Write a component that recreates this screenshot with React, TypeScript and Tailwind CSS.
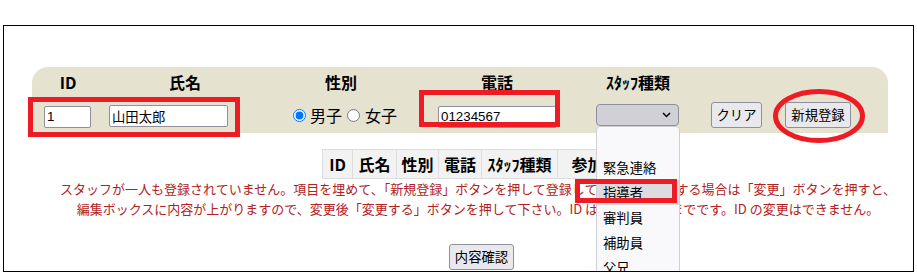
const staffTypes = ["", "緊急連絡", "指導者", "審判員", "補助員", "父兄"];

const columns = [
  { label: "ID", w: "w-[30px]" },
  { label: "氏名", w: "w-[44px]" },
  { label: "性別", w: "w-[42px]" },
  { label: "電話", w: "w-[43px]" },
  { label: "ｽﾀｯﾌ種類", w: "w-[76px]" },
  { label: "参加", w: "w-[60px]" },
];

const inputCls =
  "h-[22px] rounded-[2px] border border-[#8f8f9d] bg-white px-[2px] text-[13.33px] text-black outline-none font-['Liberation_Sans','Noto_Sans_CJK_JP',sans-serif]";

const buttonCls =
  "flex h-[26px] items-center justify-center rounded-[3px] border border-[#8f8f9d] bg-[#e9e9ed] text-[13.33px] text-black";

const App = () => {
  return (
    <div className="relative h-[273px] w-[917px] overflow-hidden bg-white font-['Noto_Sans_CJK_JP',sans-serif] text-black">
      <div className="pl-[3px] pt-[25px]">
        <div className="relative h-[247px] w-[911px] overflow-hidden border border-black">
          {/* entry panel */}
          <div className="ml-[28px] mt-[41px] w-[856px] rounded-t-[16px] bg-[#e5e2cf]">
            <div className="flex h-[30px] items-center text-[16px] font-bold leading-none">
              <div className="w-[72px] text-center">ID</div>
              <div className="w-[162px] text-center">氏名</div>
              <div className="w-[150px] text-center">性別</div>
              <div className="w-[162px] text-center">電話</div>
              <div className="w-[120px] text-center">ｽﾀｯﾌ種類</div>
            </div>
            <div className="flex h-[36px] items-center">
              <div className="w-[72px] pl-[12px]">
                <input readOnly value="1" className={`${inputCls} w-[47px]`} />
              </div>
              <div className="w-[162px] pl-[5px]">
                <input readOnly value="山田太郎" className={`${inputCls} w-[119px]`} />
              </div>
              <div className="flex w-[150px] items-center pl-[27px] text-[16px] leading-none">
                <input type="radio" name="sex" defaultChecked className="m-0 h-[13px] w-[13px]" />
                <span className="ml-[4px]">男子</span>
                <input type="radio" name="sex" className="m-0 ml-[5px] h-[13px] w-[13px]" />
                <span className="ml-[5px]">女子</span>
              </div>
              <div className="w-[162px] pl-[22px]">
                <input readOnly value="01234567" className={`${inputCls} w-[119px]`} />
              </div>
              <div className="w-[120px] pl-[18px]">
                <div className="flex h-[22px] w-[83px] items-center justify-end rounded-[4px] border border-[#8f8f9d] bg-[#d0d0d6] pr-[7px]">
                  <svg width="9" height="6" viewBox="0 0 9 6">
                    <path d="M1 1l3.5 3.5L8 1" fill="none" stroke="#000" strokeWidth="1.5" />
                  </svg>
                </div>
              </div>
              <div className="flex gap-[23px] pl-[13px]">
                <button className={`${buttonCls} w-[51px]`}>クリア</button>
                <button className={`${buttonCls} w-[66px]`}>新規登録</button>
              </div>
            </div>
          </div>

          {/* staff list header */}
          <div className="ml-[318px] mt-[16px] flex h-[30px]">
            {columns.map((c) => (
              <div
                key={c.label}
                className={`${c.w} flex items-center justify-center border-y border-l border-[#dddddd] bg-[#f2f2f2] text-[16px] font-bold leading-none`}
              >
                {c.label}
              </div>
            ))}
          </div>

          <div className="pl-[39px] text-center text-[13px] leading-[20px] text-[#b22222]">
            <p>
              スタッフが一人も登録されていません。項目を埋めて、「新規登録」ボタンを押して登録して下さい。変更する場合は「変更」ボタンを押すと、
            </p>
            <p>
              編集ボックスに内容が上がりますので、変更後「変更する」ボタンを押して下さい。ID は半角数字8桁までです。ID の変更はできません。
            </p>
          </div>

          <div className="mt-[25px] flex justify-center pl-[46px]">
            <button className={`${buttonCls} w-[65px]`}>内容確認</button>
          </div>

          {/* open select list */}
          <div className="absolute left-[592px] top-[100px] w-[84px] rounded-t-[4px] border border-[#cfcfd4] bg-[#f9f9fb] pt-[3px] text-[13.33px]">
            {staffTypes.map((t, i) => (
              <div
                key={i}
                className={`flex h-[25px] items-center pl-[6px] ${i === 2 ? "bg-[#dcdce0]" : ""}`}
              >
                {t}
              </div>
            ))}
          </div>
        </div>
      </div>

      {/* red annotations */}
      <div className="absolute left-[28px] top-[97px] h-[40px] w-[212px] border-[5px] border-[#ed1c24]" />
      <div className="absolute left-[419px] top-[90px] h-[37px] w-[141px] border-[5px] border-[#ed1c24]" />
      <div className="absolute left-[575px] top-[179px] h-[24px] w-[102px] border-[5px] border-[#ed1c24]" />
      <svg className="absolute left-[770px] top-[86px]" width="100" height="60" viewBox="0 0 100 60">
        <ellipse cx="49" cy="30" rx="43.5" ry="24.5" fill="none" stroke="#ed1c24" strokeWidth="5" />
      </svg>
    </div>
  );
};

export default App;
